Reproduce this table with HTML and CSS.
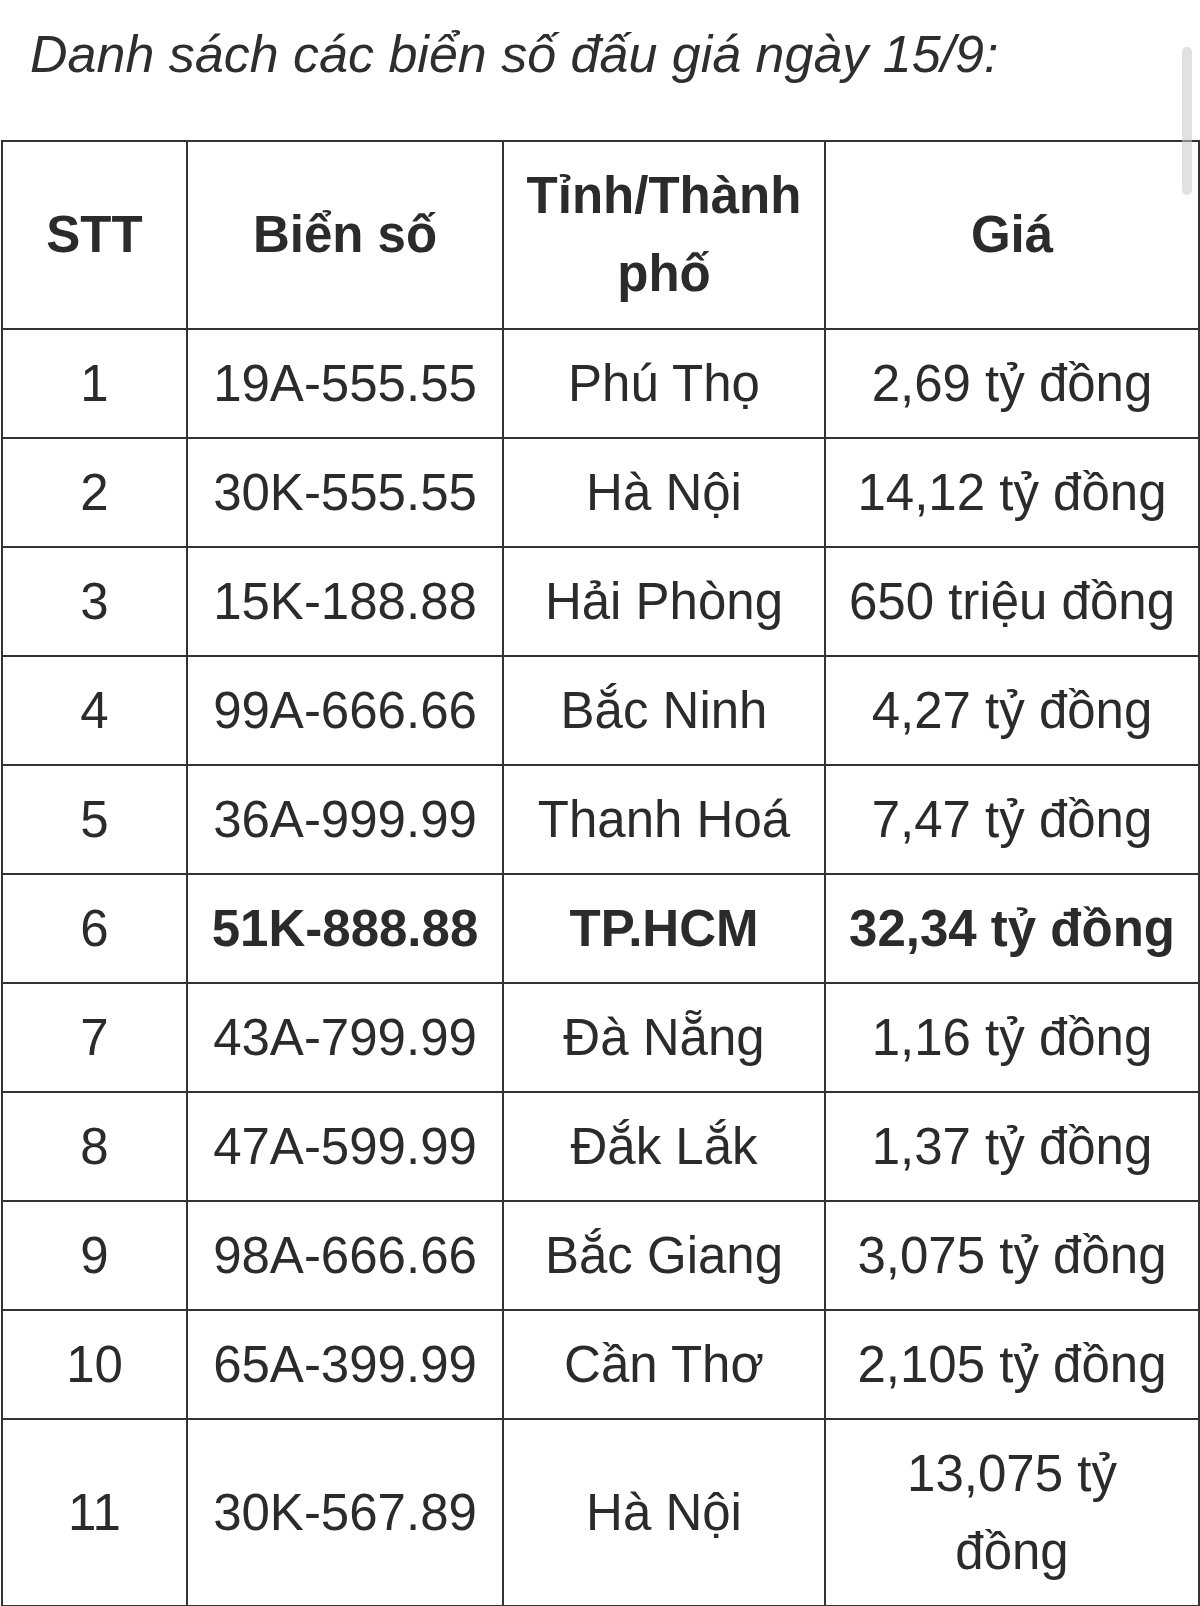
FILE: index.html
```html
<!DOCTYPE html>
<html lang="vi">
<head>
<meta charset="utf-8">
<title>Danh sách các biển số đấu giá</title>
<link rel="stylesheet" href="styles.css">
</head>
<body>
<div class="page">
  <p class="title">Danh sách các biển số đấu giá ngày 15/9:</p>
  <table class="plates">
    <colgroup>
      <col class="c-stt">
      <col class="c-plate">
      <col class="c-city">
      <col class="c-price">
    </colgroup>
    <thead>
      <tr><th>STT</th><th>Biển số</th><th>Tỉnh/Thành phố</th><th>Giá</th></tr>
    </thead>
    <tbody>
      <tr><td>1</td><td>19A-555.55</td><td>Phú Thọ</td><td>2,69 tỷ đồng</td></tr>
      <tr><td>2</td><td>30K-555.55</td><td>Hà Nội</td><td>14,12 tỷ đồng</td></tr>
      <tr><td>3</td><td>15K-188.88</td><td>Hải Phòng</td><td>650 triệu đồng</td></tr>
      <tr><td>4</td><td>99A-666.66</td><td>Bắc Ninh</td><td>4,27 tỷ đồng</td></tr>
      <tr><td>5</td><td>36A-999.99</td><td>Thanh Hoá</td><td>7,47 tỷ đồng</td></tr>
      <tr class="hl"><td>6</td><td><strong>51K-888.88</strong></td><td><strong>TP.HCM</strong></td><td><strong>32,34 tỷ đồng</strong></td></tr>
      <tr><td>7</td><td>43A-799.99</td><td>Đà Nẵng</td><td>1,16 tỷ đồng</td></tr>
      <tr><td>8</td><td>47A-599.99</td><td>Đắk Lắk</td><td>1,37 tỷ đồng</td></tr>
      <tr><td>9</td><td>98A-666.66</td><td>Bắc Giang</td><td>3,075 tỷ đồng</td></tr>
      <tr><td>10</td><td>65A-399.99</td><td>Cần Thơ</td><td>2,105 tỷ đồng</td></tr>
      <tr><td>11</td><td>30K-567.89</td><td>Hà Nội</td><td>13,075 tỷ đồng</td></tr>
    </tbody>
  </table>
  <div class="scrollbar"></div>
</div>
</body>
</html>
```

FILE: styles.css
```css
html, body {
  margin: 0;
  padding: 0;
  background: #ffffff;
}

.page {
  position: relative;
  width: 1200px;
  padding-top: 15px;
  font-family: "Liberation Sans", Arial, sans-serif;
  color: #2b2b2b;
}

.title {
  margin: 0 0 47px 0;
  padding-left: 30px;
  font-size: 52px;
  line-height: 78px;
  font-style: italic;
  color: #2e2e2e;
}

.plates {
  margin-left: 1px;
  width: 1197px;
  table-layout: fixed;
  border-collapse: collapse;
  font-size: 51px;
  line-height: 78px;
}

.c-stt { width: 185px; }
.c-plate { width: 316px; }
.c-city { width: 322px; }
.c-price { width: 374px; }

.plates th,
.plates td {
  border: 2px solid #333333;
  padding: 15px 18px 14px 18px;
  text-align: center;
  vertical-align: middle;
}

.plates th {
  font-weight: bold;
  padding-bottom: 15px;
}

.plates strong {
  font-weight: bold;
}

.scrollbar {
  position: absolute;
  left: 1182px;
  top: 47px;
  width: 10px;
  height: 148px;
  border-radius: 5px;
  background: rgba(200, 200, 200, 0.55);
}
```
